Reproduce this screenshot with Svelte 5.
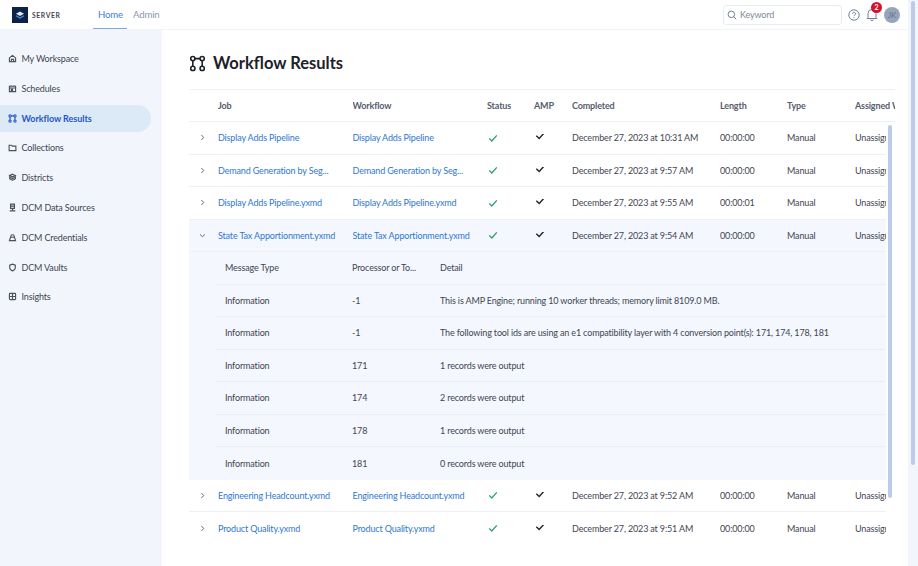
<script>
	const nav = [
		{ label: 'My Workspace', icon: 'home' },
		{ label: 'Schedules', icon: 'calendar' },
		{ label: 'Workflow Results', icon: 'workflow', active: true },
		{ label: 'Collections', icon: 'folder' },
		{ label: 'Districts', icon: 'districts' },
		{ label: 'DCM Data Sources', icon: 'source' },
		{ label: 'DCM Credentials', icon: 'lock' },
		{ label: 'DCM Vaults', icon: 'shield' },
		{ label: 'Insights', icon: 'insights' }
	];

	const icons = {
		home: 'M2.5 7 8 2.5 13.5 7v6.5h-11zM6 13.5V9.5h4v4',
		calendar: 'M2.5 4h11v9.5h-11zM2.5 7h11M5.5 2.2V5M10.5 2.2V5M6 9.5h2v2H6z',
		folder: 'M2 4h4.3l1.4 1.6H14v7.9H2z',
		districts: 'M8 2.2 13 4.5 8 6.8 3 4.5zM3 7.5l5 2.3 5-2.3M3 10.5l5 2.3 5-2.3M3 4.5v6M13 4.5v6',
		source: 'M4.5 2h7v7.5h-7zM8 9.5v3.5M3 14h10M4.5 5.5h7',
		lock: 'M5 7.5V6a3 3 0 0 1 6 0v1.5M2.5 13.5 4.5 7.5h7l2 6z',
		shield: 'M8 2 13 4v4c0 3-2.2 5-5 6-2.8-1-5-3-5-6V4z',
		insights: 'M4 2.5h8A1.500 1.500 0 0 1 13.5 4v8a1.500 1.500 0 0 1-1.500 1.500H4A1.500 1.500 0 0 1 2.5 12V4A1.500 1.500 0 0 1 4 2.5zM8 2.5v11M2.5 8h11'
	};

	const cols = ['Job', 'Workflow', 'Status', 'AMP', 'Completed', 'Length', 'Type', 'Assigned Worker'];

	const jobs = [
		{ name: 'Display Adds Pipeline', done: 'December 27, 2023 at 10:31 AM', len: '00:00:00' },
		{ name: 'Demand Generation by Seg...', done: 'December 27, 2023 at 9:57 AM', len: '00:00:00' },
		{ name: 'Display Adds Pipeline.yxmd', done: 'December 27, 2023 at 9:55 AM', len: '00:00:01' },
		{ name: 'State Tax Apportionment.yxmd', done: 'December 27, 2023 at 9:54 AM', len: '00:00:00', open: true },
		{ name: 'Engineering Headcount.yxmd', done: 'December 27, 2023 at 9:52 AM', len: '00:00:00' },
		{ name: 'Product Quality.yxmd', done: 'December 27, 2023 at 9:51 AM', len: '00:00:00' }
	];

	const messages = [
		{ id: '-1', text: 'This is AMP Engine; running 10 worker threads; memory limit 8109.0 MB.' },
		{ id: '-1', text: 'The following tool ids are using an e1 compatibility layer with 4 conversion point(s): 171, 174, 178, 181' },
		{ id: '171', text: '1 records were output' },
		{ id: '174', text: '2 records were output' },
		{ id: '178', text: '1 records were output' },
		{ id: '181', text: '0 records were output' }
	];
</script>

{#snippet workflowIcon(size, width)}
	<svg width={size} height={size} viewBox="0 0 16 16" fill="none" stroke="currentColor" stroke-width={width}>
		<circle cx="3.6" cy="3.4" r="2" />
		<circle cx="12.4" cy="3.4" r="2" />
		<circle cx="3.6" cy="12.6" r="2" />
		<circle cx="12.4" cy="12.6" r="2" />
		<path d="M5.6 3.4h4.8M3.6 5.4v5.2M12.4 5.4v5.2" />
	</svg>
{/snippet}

<div class="app">
	<div class="page">
		<header>
			<div class="brand">
				<svg width="16" height="16" viewBox="0 0 16 16">
					<rect width="16" height="16" fill="#0b2347" />
					<path d="M8 4.5 12 6.700 8 9 4 6.700z" fill="#dfe9f7" />
					<path d="M4 8.800 8 11l4-2.200" fill="none" stroke="#4f8fdb" stroke-width="1.1" />
				</svg>
				<span class="brand-name">SERVER</span>
			</div>
			<nav class="tabs">
				<span class="tab current">Home</span>
				<span class="tab">Admin</span>
			</nav>
			<div class="tools">
				<div class="search">
					<svg width="10" height="10" viewBox="0 0 12 12" fill="none" stroke="#71809a" stroke-width="1.200">
						<circle cx="5.2" cy="5.2" r="3.9" />
						<path d="m8 8 3 3" />
					</svg>
					<span>Keyword</span>
				</div>
				<svg class="help" width="12" height="12" viewBox="0 0 12 12" fill="none" stroke="#71809a" stroke-width="1">
					<circle cx="6" cy="6" r="5.2" />
					<path d="M4.5 4.7a1.5 1.5 0 1 1 2.3 1.3c-.5.3-.8.6-.8 1.100M6 8.300v.9" />
				</svg>
				<span class="bell">
					<svg width="12" height="13" viewBox="0 0 12 13" fill="none" stroke="#71809a" stroke-width="1">
						<path d="M2 9.500V5.500a4 4 0 0 1 8 0v4l1 1H1zM4.800 11.500a1.200 1.200 0 0 0 2.400 0" />
					</svg>
					<span class="badge">2</span>
				</span>
				<span class="avatar">JK</span>
			</div>
		</header>

		<div class="body">
			<aside>
				{#each nav as item}
					<div class="nav-item" class:active={item.active}>
						{#if item.icon === 'workflow'}
							{@render workflowIcon(9, 2)}
						{:else}
							<svg width="9" height="9" viewBox="0 0 16 16" fill="none" stroke="currentColor" stroke-width="2">
								<path d={icons[item.icon]} />
							</svg>
						{/if}
						<span>{item.label}</span>
					</div>
				{/each}
			</aside>

			<main>
				<h1>{@render workflowIcon(17, 1.5)}<span>Workflow Results</span></h1>
				<div class="table">
					<div class="row head">
						<span></span>
						{#each cols as col}
							<span class="cell">{col}</span>
						{/each}
					</div>
					<div class="rows">
						{#each jobs as job}
							<div class="row" class:open={job.open}>
								<span class="chevron">
									<svg width="7" height="7" viewBox="0 0 8 8" fill="none" stroke="#4b5568" stroke-width="1">
										<path d={job.open ? 'M1.2 2.8 4 5.4l2.8-2.6' : 'M2.8 1.2 5.4 4 2.8 6.8'} />
									</svg>
								</span>
								<span class="cell link">{job.name}</span>
								<span class="cell link">{job.name}</span>
								<span class="cell">
									<svg class="check" width="10" height="10" viewBox="0 0 10 10" fill="none" stroke="#2f9e6b" stroke-width="1.3">
										<path d="M1.2 5.4 3.8 8 8.8 2.4" />
									</svg>
								</span>
								<span class="cell">
									<svg class="amp" width="11" height="11" viewBox="0 0 10 10" fill="none" stroke="#20242e" stroke-width="1.3">
										<path d="M1.2 5.2 3.8 7.8 8.8 2.2" />
									</svg>
								</span>
								<span class="cell">{job.done}</span>
								<span class="cell">{job.len}</span>
								<span class="cell">Manual</span>
								<span class="cell">Unassigned</span>
							</div>
							{#if job.open}
								<div class="detail">
									<div class="msg msg-head">
										<span>Message Type</span>
										<span>Processor or To...</span>
										<span>Detail</span>
									</div>
									{#each messages as m}
										<div class="msg">
											<span>Information</span>
											<span>{m.id}</span>
											<span>{m.text}</span>
										</div>
									{/each}
								</div>
							{/if}
						{/each}
					</div>
				</div>
				<div class="table-thumb"></div>
			</main>
		</div>
	</div>
	<div class="page-track"><div class="page-thumb"></div></div>
</div>

<style>
	:global(body) {
		margin: 0;
		overflow: hidden;
		background: #fff;
	}

	.app {
		width: 918px;
		height: 566px;
		display: flex;
		overflow: hidden;
		font-family: Lato, "Open Sans", sans-serif;
		font-size: 9px;
		letter-spacing: -0.15px;
		color: #3f4552;
	}

	.page {
		flex: 1;
		min-width: 0;
	}

	header {
		height: 29px;
		display: flex;
		align-items: stretch;
		padding-right: 8px;
		border-bottom: 1px solid #f1f3f7;
	}

	.brand {
		display: flex;
		align-items: center;
		gap: 4px;
		padding-left: 12px;
		width: 81px;
	}

	.brand-name {
		font-size: 6.8px;
		letter-spacing: 0.6px;
		color: #3f4552;
		font-weight: 700;
	}

	.tabs {
		display: flex;
	}

	.tab {
		padding: 0 5px;
		margin-right: 1px;
		line-height: 29px;
		height: 29px;
		box-sizing: border-box;
		font-size: 9.6px;
		color: #8b99b1;
	}

	.tab.current {
		color: #3f7fd8;
		width: 34px;
		border-bottom: 1.5px solid #7fa8e4;
	}

	.tools {
		margin-left: auto;
		display: flex;
		align-items: center;
	}

	.search {
		width: 119px;
		height: 20px;
		box-sizing: border-box;
		border: 1px solid #e6ebf4;
		border-radius: 3px;
		display: flex;
		align-items: center;
		gap: 3px;
		padding-left: 3px;
		color: #808a9a;
		margin-right: 6px;
	}

	.help {
		margin-right: 6px;
	}

	.bell {
		position: relative;
		display: flex;
		margin-right: 6px;
	}

	.badge {
		position: absolute;
		top: -6px;
		left: 5px;
		width: 11px;
		height: 11px;
		border-radius: 50%;
		background: #d3122f;
		color: #fff;
		font-size: 7px;
		font-weight: 700;
		line-height: 11px;
		text-align: center;
	}

	.avatar {
		width: 16px;
		height: 16px;
		border-radius: 50%;
		background: #97a4ba;
		color: #68748a;
		font-size: 8px;
		line-height: 16px;
		text-align: center;
	}

	.body {
		display: flex;
		height: 537px;
	}

	aside {
		width: 162px;
		flex: none;
		background: #f2f6fc;
		padding-top: 15px;
		box-sizing: border-box;
	}

	.nav-item {
		display: flex;
		align-items: center;
		gap: 5px;
		height: 27px;
		margin: 0 11px 2.8px 0;
		padding-left: 7.5px;
		color: #3f4552;
	}

	.nav-item svg {
		color: #4a505c;
		flex: none;
	}

	.nav-item.active {
		background: #dce9f7;
		border-radius: 0 14px 14px 0;
		color: #2257c5;
		font-weight: 700;
		letter-spacing: -0.05px;
	}

	.nav-item.active svg {
		color: #2257c5;
	}

	main {
		flex: 1;
		min-width: 0;
		padding-left: 27px;
		position: relative;
		overflow: hidden;
	}

	h1 {
		margin: 0;
		height: 58.5px;
		display: flex;
		align-items: center;
		gap: 7px;
		padding-top: 8px;
		box-sizing: border-box;
		font-size: 16.5px;
		letter-spacing: 0;
		font-weight: 700;
		color: #1d2129;
	}

	h1 svg {
		flex: none;
	}

	.table {
		width: 706px;
		overflow: hidden;
		border-top: 1px solid #eef1f6;
	}

	.rows {
		width: 697px;
		overflow: hidden;
	}

	.row {
		display: grid;
		grid-template-columns: 29px 134.5px 134.5px 47px 38px 148px 67px 68px 100px;
		height: 32.5px;
		align-items: center;
		box-sizing: border-box;
		border-bottom: 1px solid #edf0f5;
	}

	.rows .row:last-child {
		border-bottom: none;
	}

	.row.head {
		color: #555d6e;
		font-weight: 700;
		border-bottom-width: 1.5px;
	}

	.row.open {
		background: #f4f7fd;
	}

	.chevron {
		display: flex;
		padding-left: 10px;
	}

	.cell {
		white-space: nowrap;
		overflow: hidden;
		display: flex;
		align-items: center;
	}

	.link {
		color: #2f78d0;
	}

	.check {
		margin-left: 1px;
	}

	.amp {
		margin-top: -4px;
		margin-left: 1px;
	}

	.detail {
		background: #f4f7fd;
		padding-left: 27px;
	}

	.msg {
		display: grid;
		grid-template-columns: 127px 88px 1fr;
		align-items: center;
		height: 32.5px;
		box-sizing: border-box;
		padding-left: 9px;
		border-bottom: 1px solid #e9edf4;
	}

	.msg:last-child {
		border-bottom: none;
	}

	.table-thumb {
		position: absolute;
		left: 726px;
		top: 95px;
		width: 4px;
		height: 373px;
		border-radius: 2px;
		background: #bccbe6;
	}

	.page-track {
		width: 10px;
		flex: none;
		background: #f2f6fc;
		padding: 1px 3px 0;
		box-sizing: border-box;
	}

	.page-thumb {
		width: 4px;
		height: 464px;
		border-radius: 2px;
		background: #bccbe6;
	}
</style>
